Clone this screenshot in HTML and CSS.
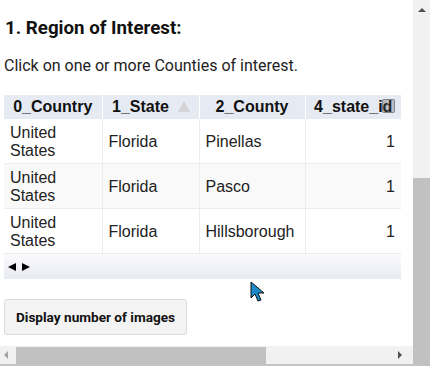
FILE: index.html
```html
<!DOCTYPE html>
<html>
<head>
<meta charset="utf-8">
<link rel="stylesheet" href="styles.css">
</head>
<body>
<div class="frame">
  <div class="viewport">
    <h3 class="title">1. Region of Interest:</h3>
    <p class="intro">Click on one or more Counties of interest.</p>
    <div class="grid-wrap">
      <table class="grid">
        <colgroup>
          <col class="c1"><col class="c2"><col class="c3"><col class="c4">
        </colgroup>
        <thead>
          <tr>
            <th>0_Country</th>
            <th class="sorted">1_State<span class="sort-up"></span></th>
            <th>2_County</th>
            <th class="last">4_state_id<span class="handle"></span></th>
          </tr>
        </thead>
        <tbody>
          <tr>
            <td>United<br>States</td><td>Florida</td><td>Pinellas</td><td class="num">1</td>
          </tr>
          <tr class="alt">
            <td>United<br>States</td><td>Florida</td><td>Pasco</td><td class="num">1</td>
          </tr>
          <tr>
            <td>United<br>States</td><td>Florida</td><td>Hillsborough</td><td class="num">1</td>
          </tr>
        </tbody>
      </table>
      <div class="grid-scroller">
        <span class="tri-left"></span><span class="tri-right"></span>
      </div>
    </div>
    <button class="action">Display number of images</button>
  </div>
  <div class="vbar">
    <div class="vtrack"><span class="arrow-up"></span></div>
    <div class="vthumb"></div>
  </div>
  <div class="hbar">
    <span class="arrow-left"></span>
    <div class="hthumb"></div>
    <div class="hrest"></div>
    <span class="arrow-right"></span>
  </div>
</div>
<svg class="cursor" width="16" height="22" viewBox="0 0 16 22">
  <path d="M1 1 L1 17 L5 13 L8 20 L11 19 L8 12 L14 12 Z" fill="#1f8ac8" stroke="#111" stroke-width="1" stroke-linejoin="miter"/>
</svg>
</body>
</html>
```

FILE: styles.css
```css
html, body {
  margin: 0;
  padding: 0;
  background: #fff;
}

body {
  width: 430px;
  height: 366px;
  overflow: hidden;
  position: relative;
}

.frame {
  display: grid;
  grid-template-columns: 413px 17px;
  grid-template-rows: 346px 20px;
  width: 430px;
  height: 366px;
}

.viewport {
  grid-column: 1;
  grid-row: 1;
  overflow: hidden;
  padding: 0 4px;
  font-family: Roboto, "Liberation Sans", sans-serif;
  color: #111;
}

.title {
  margin: 17px 0 0 1px;
  font-size: 18.72px;
  line-height: 22px;
  font-weight: 700;
}

.intro {
  margin: 17px 0 0 0;
  font-size: 16px;
  line-height: 20px;
  color: #222;
}

.grid-wrap {
  margin-top: 19px;
  width: 397px;
}

.grid {
  border-collapse: collapse;
  table-layout: fixed;
  width: 397px;
  font-family: "Liberation Sans", Arial, sans-serif;
  font-size: 16px;
  line-height: 18px;
  color: #222;
}

.c1 { width: 98px; }
.c2 { width: 97px; }
.c3 { width: 106px; }
.c4 { width: 96px; }

.grid th {
  background: #e6eaf3;
  font-weight: 700;
  color: #111;
  padding: 3px 0;
  height: 18px;
  text-align: center;
  white-space: nowrap;
  border-left: 1px solid #fff;
  position: relative;
}

.grid th:first-child { border-left: none; }

.grid th.sorted {
  padding-right: 20px;
}

.sort-up {
  position: absolute;
  right: 9px;
  top: 6px;
  width: 0;
  height: 0;
  border-left: 6px solid transparent;
  border-right: 6px solid transparent;
  border-bottom: 11px solid #d4d4d4;
}

.handle {
  position: absolute;
  right: 6px;
  top: 4px;
  width: 11px;
  height: 12px;
  border: 1px solid rgba(60, 60, 60, 0.45);
  border-radius: 2px;
  background: rgba(90, 90, 90, 0.3);
}

.grid td {
  padding: 5px 6px 3px 6px;
  border-left: 1px solid #ececec;
  border-bottom: 1px solid #ececec;
  vertical-align: middle;
  background: #fff;
}

.grid td:first-child { border-left: none; }

.grid tr.alt td { background: #f9f9f9; }

.grid td.num {
  text-align: right;
}

.grid-scroller {
  height: 25px;
  background: linear-gradient(#fbfbfd, #e7eaf2);
  display: flex;
  align-items: center;
  gap: 6px;
  padding-left: 4px;
}

.tri-left, .tri-right {
  width: 0;
  height: 0;
  border-top: 4px solid transparent;
  border-bottom: 4px solid transparent;
}

.tri-left { border-right: 8px solid #000; }
.tri-right { border-left: 8px solid #000; }

.action {
  margin-top: 20px;
  width: 183px;
  height: 36px;
  background: #f3f3f3;
  border: 1px solid #dadada;
  border-radius: 3px;
  font-family: Roboto, "Liberation Sans", sans-serif;
  font-size: 13.6px;
  font-weight: 700;
  color: #111;
  padding: 0;
}

.vbar {
  grid-column: 2;
  grid-row: 1 / 3;
  display: flex;
  flex-direction: column;
  background: #f1f1f1;
}

.vtrack {
  height: 178px;
  display: flex;
  justify-content: center;
  padding-top: 8px;
  box-sizing: border-box;
}

.arrow-up {
  width: 0;
  height: 0;
  border-left: 4px solid transparent;
  border-right: 4px solid transparent;
  border-bottom: 4px solid #505050;
}

.vthumb {
  flex: 1;
  background: #c1c1c1;
}

.hbar {
  grid-column: 1;
  grid-row: 2;
  display: flex;
  align-items: center;
  background: #f1f1f1;
  border-bottom: 2px solid #c4c4c4;
  box-sizing: border-box;
}

.arrow-left {
  width: 0;
  height: 0;
  margin: 0 8px 0 4px;
  border-top: 4px solid transparent;
  border-bottom: 4px solid transparent;
  border-right: 4px solid #a3a3a3;
}

.hthumb {
  width: 250px;
  align-self: stretch;
  margin-top: 1px;
  background: #c1c1c1;
}

.hrest { flex: 1; }

.arrow-right {
  width: 0;
  height: 0;
  margin: 0 11px 0 0;
  border-top: 4px solid transparent;
  border-bottom: 4px solid transparent;
  border-left: 4px solid #505050;
}

.cursor {
  position: absolute;
  left: 250px;
  top: 281px;
}
```
